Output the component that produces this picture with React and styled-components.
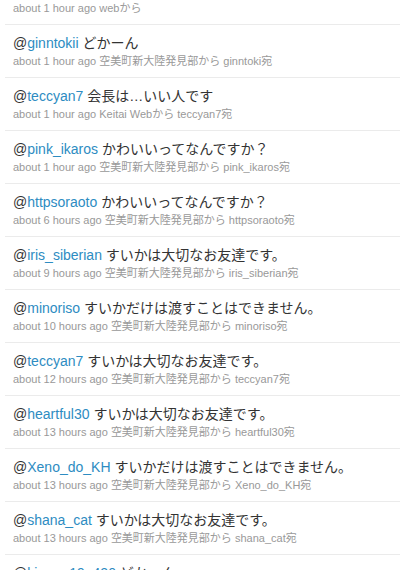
import React from "react";
import styled, { createGlobalStyle } from "styled-components";

const GlobalStyle = createGlobalStyle`
  html, body {
    margin: 0;
    padding: 0;
    background: #ffffff;
    overflow: hidden;
  }
  body {
    font-family: "Liberation Sans", "Noto Sans CJK JP", sans-serif;
  }
`;

const Timeline = styled.ul`
  list-style: none;
  margin: 0 0 0 5px;
  padding: 0;
  width: 395px;
`;

const Tweet = styled.li`
  display: flex;
  flex-direction: column;
  gap: 2px;
  padding: ${(p) => (p.$tail ? "1px 0 9px 8px" : "9px 0 9px 8px")};
  border-top: ${(p) => (p.$tail ? "none" : "1px solid #ebebeb")};
`;

const Body = styled.div`
  font-size: 14px;
  line-height: 18px;
  color: #333333;
  white-space: nowrap;
`;

const ScreenName = styled.a`
  color: #2d8cc2;
  text-decoration: none;
`;

const Meta = styled.div`
  font-size: 11px;
  line-height: 14px;
  color: #999999;
  white-space: nowrap;
`;

const SRC = "空美町新大陸発見部から";

const tweets = [
  { tail: true, time: "about 1 hour ago", source: "webから" },
  { user: "ginntokii", text: "どかーん", time: "about 1 hour ago", source: SRC, to: "ginntoki" },
  { user: "teccyan7", text: "会長は…いい人です", time: "about 1 hour ago", source: "Keitai Webから", to: "teccyan7" },
  { user: "pink_ikaros", text: "かわいいってなんですか？", time: "about 1 hour ago", source: SRC, to: "pink_ikaros" },
  { user: "httpsoraoto", text: "かわいいってなんですか？", time: "about 6 hours ago", source: SRC, to: "httpsoraoto" },
  { user: "iris_siberian", text: "すいかは大切なお友達です。", time: "about 9 hours ago", source: SRC, to: "iris_siberian" },
  { user: "minoriso", text: "すいかだけは渡すことはできません。", time: "about 10 hours ago", source: SRC, to: "minoriso" },
  { user: "teccyan7", text: "すいかは大切なお友達です。", time: "about 12 hours ago", source: SRC, to: "teccyan7" },
  { user: "heartful30", text: "すいかは大切なお友達です。", time: "about 13 hours ago", source: SRC, to: "heartful30" },
  { user: "Xeno_do_KH", text: "すいかだけは渡すことはできません。", time: "about 13 hours ago", source: SRC, to: "Xeno_do_KH" },
  { user: "shana_cat", text: "すいかは大切なお友達です。", time: "about 13 hours ago", source: SRC, to: "shana_cat" },
  { user: "kimura19_420", text: "どかーん", time: "about 14 hours ago", source: SRC, to: "kimura19_420" },
];

export default function App() {
  return (
    <>
      <GlobalStyle />
      <Timeline>
        {tweets.map((t, i) => (
          <Tweet key={i} $tail={t.tail}>
            {!t.tail && (
              <Body>
                @<ScreenName href="#">{t.user}</ScreenName> {t.text}
              </Body>
            )}
            <Meta>
              {t.time} {t.source}
              {t.to ? ` ${t.to}宛` : ""}
            </Meta>
          </Tweet>
        ))}
      </Timeline>
    </>
  );
}
